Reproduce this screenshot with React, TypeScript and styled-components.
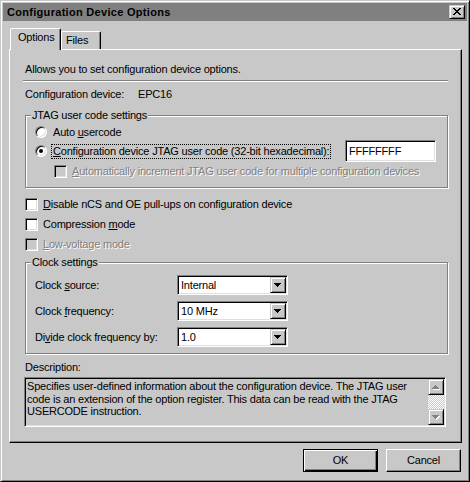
import React from 'react';
import styled, { createGlobalStyle } from 'styled-components';

const face = '#c8c8c8';
const shadow = '#808080';
const light = '#dfdfdf';

const GlobalStyle = createGlobalStyle`
  html, body {
    margin: 0;
    padding: 0;
    background: ${face};
  }
  body {
    font-family: "Liberation Sans", Arial, sans-serif;
    font-size: 11px;
    line-height: 13px;
    letter-spacing: -0.2px;
    color: #000;
  }
`;

const Window = styled.div`
  box-sizing: border-box;
  width: 470px;
  height: 482px;
  padding: 2px;
  background: ${face};
  border: 1px solid;
  border-color: ${face} #000 #000 ${face};
  box-shadow: inset 1px 1px #fff, inset -1px -1px ${shadow};
  display: flex;
  flex-direction: column;
`;

const TitleBar = styled.div`
  height: 18px;
  background: ${shadow};
  display: flex;
  align-items: center;
  padding: 0 2px 0 4px;
`;

const Title = styled.div`
  flex: 1;
  font-weight: bold;
  letter-spacing: 0.3px;
  color: #000;
`;

const raised = `
  border: 1px solid;
  border-color: ${face} #000 #000 ${face};
  box-shadow: inset 1px 1px #fff, inset -1px -1px ${shadow};
  background: ${face};
`;

const sunken = `
  border: 1px solid;
  border-color: ${shadow} #fff #fff ${shadow};
  box-shadow: inset 1px 1px #000, inset -1px -1px ${light};
`;

const CloseButton = styled.div`
  box-sizing: border-box;
  width: 16px;
  height: 14px;
  ${raised}
  display: flex;
  align-items: center;
  justify-content: center;
  padding: 0 0 1px 0;
`;

const Body = styled.div`
  flex: 1;
  padding: 7px 5px 0 6px;
  display: flex;
  flex-direction: column;
`;

const TabStrip = styled.div`
  display: flex;
  align-items: flex-end;
  height: 22px;
  margin-bottom: -1px;
  padding-left: 1px;
  position: relative;
  z-index: 1;
`;

const Tab = styled.div<{ $active?: boolean; $width: number }>`
  box-sizing: border-box;
  width: ${(p) => p.$width}px;
  height: ${(p) => (p.$active ? 22 : 18)}px;
  margin-bottom: ${(p) => (p.$active ? 0 : 1)}px;
  padding: 2px 0 0 ${(p) => (p.$active ? 7 : 4)}px;
  background: ${face};
  border-top: 1px solid #fff;
  border-left: 1px solid #fff;
  border-right: 1px solid #000;
  border-top-left-radius: 2px;
  border-top-right-radius: 2px;
  box-shadow: inset -1px 0 ${shadow};
`;

const Panel = styled.div`
  box-sizing: border-box;
  height: 394px;
  padding: 13px 13px 14px 15px;
  border: 1px solid;
  border-color: #fff #000 #000 #fff;
  box-shadow: inset -1px -1px ${shadow};
  display: flex;
  flex-direction: column;
`;

const Text = styled.div<{ $mt?: number }>`
  margin-top: ${(p) => p.$mt ?? 0}px;
  white-space: nowrap;
`;

const Separator = styled.div`
  margin: 4px 0 0 -2px;
  height: 0;
  border-top: 1px solid ${shadow};
  border-bottom: 1px solid #fff;
`;

const FieldLabel = styled.span`
  display: inline-block;
  width: 113px;
`;

const Group = styled.div<{ $mt: number; $pad: string }>`
  position: relative;
  margin-top: ${(p) => p.$mt}px;
  padding: ${(p) => p.$pad};
  border: 1px solid ${shadow};
  box-shadow: inset 1px 1px #fff, 1px 1px #fff;
  display: flex;
  flex-direction: column;
`;

const GroupLabel = styled.span`
  position: absolute;
  top: -7px;
  left: 5px;
  padding: 0 1px;
  background: ${face};
`;

const OptionRow = styled.div<{ $h: number; $indent?: number; $mt?: number }>`
  display: flex;
  align-items: center;
  height: ${(p) => p.$h}px;
  padding-left: ${(p) => p.$indent ?? 0}px;
  margin-top: ${(p) => p.$mt ?? 0}px;
  white-space: nowrap;
`;

const RadioCircle = styled.span<{ $checked?: boolean }>`
  box-sizing: border-box;
  width: 12px;
  height: 12px;
  margin-right: 6px;
  border-radius: 50%;
  border: 1px solid;
  border-color: ${shadow} #fff #fff ${shadow};
  box-shadow: inset 1px 1px #000, inset -1px -1px ${light};
  background: #fff;
  display: flex;
  align-items: center;
  justify-content: center;
  &::after {
    content: '';
    width: 4px;
    height: 4px;
    border-radius: 50%;
    background: ${(p) => (p.$checked ? '#000' : 'transparent')};
  }
`;

const CheckBox = styled.span<{ $disabled?: boolean }>`
  box-sizing: border-box;
  width: 13px;
  height: 13px;
  margin-right: 5px;
  ${sunken}
  background: ${(p) => (p.$disabled ? face : '#fff')};
`;

const Label = styled.span<{ $disabled?: boolean; $focused?: boolean }>`
  color: ${(p) => (p.$disabled ? shadow : '#000')};
  text-shadow: ${(p) => (p.$disabled ? '1px 1px 0 #fff' : 'none')};
  outline: ${(p) => (p.$focused ? '1px dotted #000' : 'none')};
  outline-offset: 0;
  padding: ${(p) => (p.$focused ? '0 1px' : '0')};
  margin-left: ${(p) => (p.$focused ? -1 : 0)}px;
`;

const TextField = styled.div`
  box-sizing: border-box;
  width: 91px;
  height: 22px;
  margin-left: auto;
  padding: 2px 0 0 3px;
  ${sunken}
  background: #fff;
  line-height: 16px;
`;

const ClockGrid = styled.div`
  display: grid;
  grid-template-columns: 142px 111px;
  grid-auto-rows: 20px;
  row-gap: 6px;
  align-items: center;
`;

const Combo = styled.div`
  box-sizing: border-box;
  height: 20px;
  padding: 1px;
  ${sunken}
  background: #fff;
  display: flex;
  align-items: center;
`;

const ComboValue = styled.span`
  flex: 1;
  padding-left: 2px;
`;

const ArrowButton = styled.div<{ $h?: number }>`
  box-sizing: border-box;
  width: 16px;
  height: ${(p) => p.$h ?? 16}px;
  ${raised}
  display: flex;
  align-items: center;
  justify-content: center;
`;

const DescBox = styled.div`
  box-sizing: border-box;
  margin: 3px 0 0 -1px;
  width: 422px;
  height: 50px;
  padding: 1px;
  ${sunken}
  background: ${face};
  display: flex;
`;

const DescText = styled.div`
  flex: 1;
  padding: 1px 0 0 1px;
  line-height: 12.5px;
  white-space: nowrap;
`;

const ScrollBar = styled.div`
  width: 16px;
  display: flex;
  flex-direction: column;
`;

const ScrollTrack = styled.div`
  flex: 1;
  background-image: conic-gradient(#fff 25%, ${face} 0 50%, #fff 0 75%, ${face} 0);
  background-size: 2px 2px;
`;

const ButtonRow = styled.div`
  display: flex;
  justify-content: flex-end;
  gap: 8px;
  margin-top: 6px;
  padding-right: 1px;
`;

const PushButton = styled.div<{ $default?: boolean }>`
  box-sizing: border-box;
  width: 75px;
  height: 23px;
  display: flex;
  align-items: center;
  justify-content: center;
  background: ${face};
  border: 1px solid;
  border-color: ${(p) => (p.$default ? '#000' : '#fff #000 #000 #fff')};
  box-shadow: ${(p) =>
    p.$default
      ? `inset 1px 1px #fff, inset -1px -1px #000, inset -2px -2px ${shadow}`
      : `inset -1px -1px ${shadow}`};
`;

const CloseGlyph = () => (
  <svg width="8" height="7" viewBox="0 0 8 7" shapeRendering="crispEdges">
    <g fill="#000">
      <rect x="0" y="0" width="2" height="1" />
      <rect x="6" y="0" width="2" height="1" />
      <rect x="1" y="1" width="2" height="1" />
      <rect x="5" y="1" width="2" height="1" />
      <rect x="2" y="2" width="4" height="1" />
      <rect x="3" y="3" width="2" height="1" />
      <rect x="2" y="4" width="4" height="1" />
      <rect x="1" y="5" width="2" height="1" />
      <rect x="5" y="5" width="2" height="1" />
      <rect x="0" y="6" width="2" height="1" />
      <rect x="6" y="6" width="2" height="1" />
    </g>
  </svg>
);

const Triangle = ({ dir, disabled }: { dir: 'up' | 'down'; disabled?: boolean }) => {
  const rows = [1, 3, 5, 7];
  const ordered = dir === 'up' ? rows : [...rows].reverse();
  const shape = (fill: string, dx: number, dy: number) => (
    <g fill={fill}>
      {ordered.map((w, i) => (
        <rect key={i} x={(7 - w) / 2 + dx} y={i + dy} width={w} height={1} />
      ))}
    </g>
  );
  return (
    <svg width="8" height="5" viewBox="0 0 8 5" shapeRendering="crispEdges">
      {disabled && shape('#fff', 1, 1)}
      {shape(disabled ? shadow : '#000', 0, 0)}
    </svg>
  );
};

const Select = ({ value }: { value: string }) => (
  <Combo>
    <ComboValue>{value}</ComboValue>
    <ArrowButton>
      <Triangle dir="down" />
    </ArrowButton>
  </Combo>
);

export default function App() {
  return (
    <>
      <GlobalStyle />
      <Window>
        <TitleBar>
          <Title>Configuration Device Options</Title>
          <CloseButton>
            <CloseGlyph />
          </CloseButton>
        </TitleBar>
        <Body>
          <TabStrip>
            <Tab $active $width={51}>Options</Tab>
            <Tab $width={40}>Files</Tab>
          </TabStrip>
          <Panel>
            <Text>Allows you to set configuration device options.</Text>
            <Separator />
            <Text $mt={6}>
              <FieldLabel>Configuration device:</FieldLabel>EPC16
            </Text>

            <Group $mt={14} $pad="8px 11px 8px 9px">
              <GroupLabel>JTAG user code settings</GroupLabel>
              <OptionRow $h={16}>
                <RadioCircle />
                <Label>
                  Auto <u>u</u>sercode
                </Label>
              </OptionRow>
              <OptionRow $h={22}>
                <RadioCircle $checked />
                <Label $focused>
                  <u>C</u>onfiguration device JTAG user code (32-bit hexadecimal):
                </Label>
                <TextField>FFFFFFFF</TextField>
              </OptionRow>
              <OptionRow $h={16} $indent={19} $mt={1}>
                <CheckBox $disabled />
                <Label $disabled>
                  <u>A</u>utomatically increment JTAG user code for multiple configuration devices
                </Label>
              </OptionRow>
            </Group>

            <OptionRow $h={20} $mt={6}>
              <CheckBox />
              <Label>
                <u>D</u>isable nCS and OE pull-ups on configuration device
              </Label>
            </OptionRow>
            <OptionRow $h={20}>
              <CheckBox />
              <Label>
                Compression <u>m</u>ode
              </Label>
            </OptionRow>
            <OptionRow $h={20}>
              <CheckBox $disabled />
              <Label $disabled>
                <u>L</u>ow-voltage mode
              </Label>
            </OptionRow>

            <Group $mt={8} $pad="12px 0 6px 9px">
              <GroupLabel>Clock settings</GroupLabel>
              <ClockGrid>
                <Label>
                  Clock <u>s</u>ource:
                </Label>
                <Select value="Internal" />
                <Label>
                  Clock <u>f</u>requency:
                </Label>
                <Select value="10 MHz" />
                <Label>
                  Di<u>v</u>ide clock frequency by:
                </Label>
                <Select value="1.0" />
              </ClockGrid>
            </Group>

            <Text $mt={7}>Description:</Text>
            <DescBox>
              <DescText>
                Specifies user-defined information about the configuration device. The JTAG user
                <br />
                code is an extension of the option register. This data can be read with the JTAG
                <br />
                USERCODE instruction.
              </DescText>
              <ScrollBar>
                <ArrowButton>
                  <Triangle dir="up" disabled />
                </ArrowButton>
                <ScrollTrack />
                <ArrowButton>
                  <Triangle dir="down" disabled />
                </ArrowButton>
              </ScrollBar>
            </DescBox>
          </Panel>
          <ButtonRow>
            <PushButton $default>OK</PushButton>
            <PushButton>Cancel</PushButton>
          </ButtonRow>
        </Body>
      </Window>
    </>
  );
}
